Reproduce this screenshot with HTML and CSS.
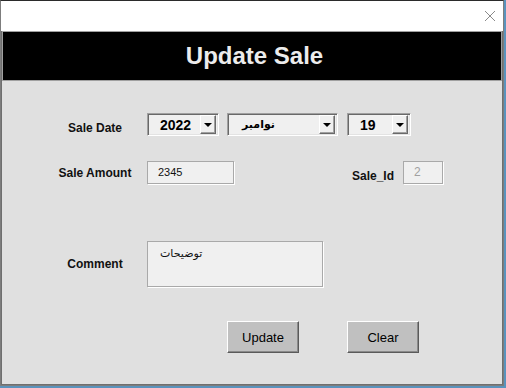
FILE: index.html
```html
<!DOCTYPE html>
<html lang="en">
<head>
    <meta charset="UTF-8">
    <title>Update Sale</title>
    <link rel="stylesheet" href="styles.css">
</head>
<body>
    <div class="window">
        <div class="titlebar">
            <svg class="close" width="12" height="12" viewBox="0 0 12 12">
                <path d="M1 1 L11 11 M11 1 L1 11" stroke="#8a8a8a" stroke-width="1" fill="none"/>
            </svg>
        </div>
        <div class="client">
            <div class="header">Update Sale</div>

            <div class="form">
                <div class="row row-date">
                    <div class="label label-low">Sale Date</div>
                    <div class="combo combo-year">
                        <span class="combo-text">2022</span>
                        <span class="drop"><i></i></span>
                    </div>
                    <div class="combo combo-month">
                        <span class="combo-text arabic">نوامبر</span>
                        <span class="drop"><i></i></span>
                    </div>
                    <div class="combo combo-day">
                        <span class="combo-text">19</span>
                        <span class="drop"><i></i></span>
                    </div>
                </div>

                <div class="row row-amount">
                    <div class="label">Sale Amount</div>
                    <div class="textbox amount">2345</div>
                    <div class="label-id label-low">Sale_Id</div>
                    <div class="textbox sale-id">2</div>
                </div>

                <div class="row row-comment">
                    <div class="label">Comment</div>
                    <div class="textbox comment"><span class="arabic">توضيحات</span></div>
                </div>

                <div class="row row-buttons">
                    <button class="btn">Update</button>
                    <button class="btn">Clear</button>
                </div>
            </div>
        </div>
    </div>
</body>
</html>
```

FILE: styles.css
```css
body {
    margin: 0;
    width: 506px;
    height: 388px;
    overflow: hidden;
    background-color: #5a93bd;
    font-family: 'Liberation Sans', Arial, sans-serif;
}
.window {
    width: 504px;
    height: 386px;
    box-sizing: border-box;
    border: 1px solid #7d7d7d;
    border-top-color: #2b2b2b;
    display: flex;
    flex-direction: column;
}
.titlebar {
    height: 30px;
    background-color: #fff;
    position: relative;
}
.close {
    position: absolute;
    right: 7px;
    top: 9px;
}
.client {
    flex: 1;
    background-color: #e0e0e0;
    border-left: 1px solid #6f6f6f;
    border-right: 1px solid #6f6f6f;
    border-bottom: 1px solid #6f6f6f;
}
.header {
    height: 48px;
    background-color: #000;
    border: 1px solid #a0a0a0;
    color: #ececec;
    font-size: 24px;
    font-weight: bold;
    text-align: center;
    line-height: 48px;
    padding-left: 5px;
}
.form {
    padding-left: 41px;
}
.row {
    display: flex;
    align-items: center;
}
.row-date {
    margin-top: 32px;
}
.row-amount {
    margin-top: 25px;
}
.row-comment {
    margin-top: 57px;
}
.row-buttons {
    margin-top: 34px;
    padding-left: 184px;
    gap: 48px;
}
.label {
    width: 104px;
    text-align: center;
    font-size: 12px;
    font-weight: bold;
    color: #111;
}
.label-low {
    margin-top: 7px;
}
.label-id {
    margin-left: 118px;
    margin-right: 9px;
    font-size: 12px;
    font-weight: bold;
    color: #111;
}
.combo {
    height: 23px;
    box-sizing: border-box;
    background-color: #f0f0f0;
    border-top: 1px solid #a0a0a0;
    border-left: 1px solid #a0a0a0;
    border-right: 1px solid #fff;
    border-bottom: 1px solid #fff;
    box-shadow: inset 1px 1px #696969, inset -1px -1px #e3e3e3;
    display: flex;
    align-items: center;
    padding: 2px;
}
.combo-year {
    width: 72px;
    margin-right: 8px;
}
.combo-month {
    width: 111px;
    margin-right: 9px;
}
.combo-day {
    width: 64px;
}
.combo-text {
    flex: 1;
    font-size: 14px;
    font-weight: bold;
    color: #000;
    padding-left: 10px;
    text-align: left;
}
.combo-month .combo-text {
    direction: ltr;
    padding-left: 12px;
    font-size: 11px;
}
.arabic {
    font-family: 'DejaVu Sans', sans-serif;
}
.drop {
    width: 16px;
    height: 19px;
    box-sizing: border-box;
    background-color: #f0f0f0;
    border-top: 1px solid #fff;
    border-left: 1px solid #fff;
    border-right: 1px solid #696969;
    border-bottom: 1px solid #696969;
    box-shadow: inset -1px -1px #a0a0a0;
    display: flex;
    align-items: center;
    justify-content: center;
}
.drop i {
    width: 0;
    height: 0;
    border-left: 4px solid transparent;
    border-right: 4px solid transparent;
    border-top: 4px solid #000;
}
.textbox {
    height: 23px;
    box-sizing: border-box;
    background-color: #f0f0f0;
    border: 1px solid #a9a9a9;
    box-shadow: 1px 1px #fff;
    font-size: 11px;
    color: #111;
    padding-left: 10px;
    line-height: 21px;
}
.amount {
    width: 87px;
}
.sale-id {
    width: 40px;
    color: #a0a0a0;
    font-size: 12px;
}
.comment {
    width: 176px;
    height: 46px;
    padding: 4px 0 0 12px;
    line-height: 15px;
    font-size: 11px;
}
.btn {
    width: 72px;
    height: 32px;
    background-color: #c0c0c0;
    border-top: 1px solid #fff;
    border-left: 1px solid #fff;
    border-right: 1px solid #5a5a5a;
    border-bottom: 1px solid #5a5a5a;
    box-shadow: inset -1px -1px #8a8a8a;
    font-family: 'Liberation Sans', Arial, sans-serif;
    font-size: 13px;
    color: #000;
    padding: 0;
}
```
